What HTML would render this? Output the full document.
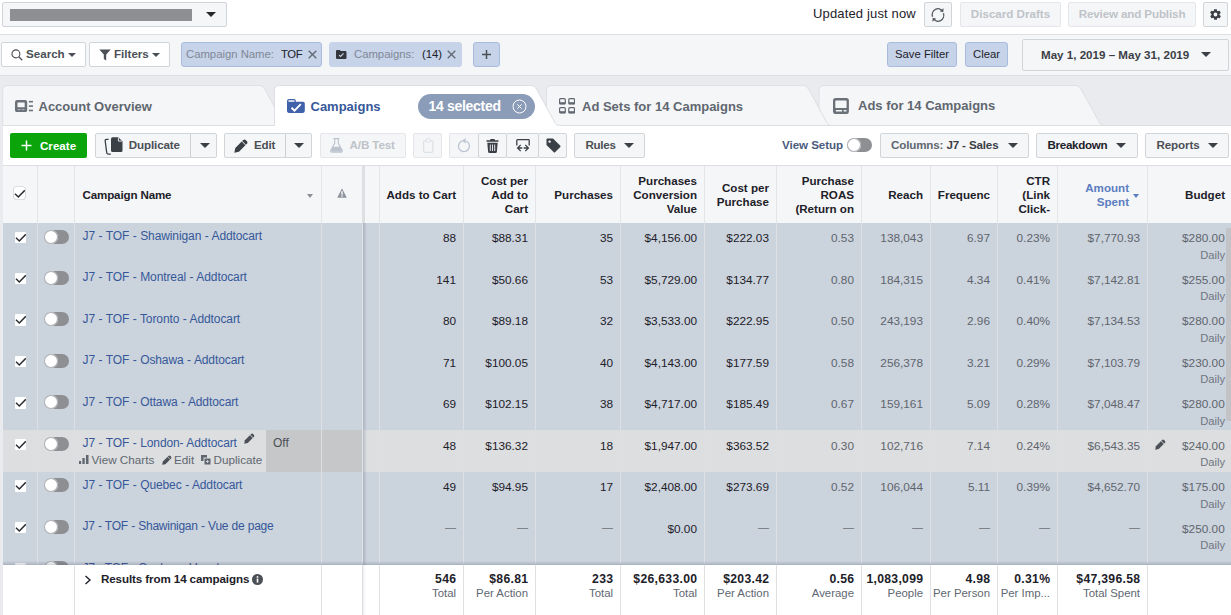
<!DOCTYPE html>
<html lang="en">
<head>
<meta charset="utf-8">
<title>Ads Manager</title>
<style>
*{box-sizing:border-box;margin:0;padding:0}
html,body{width:1231px;height:615px;overflow:hidden;background:#e9ebee;font-family:"Liberation Sans",Arial,sans-serif;font-size:12px;color:#1d2129}
.abs{position:absolute}
.r{text-align:right}
#topbar{left:0;top:0;width:1231px;height:35px;background:#fff;border-bottom:1px solid #dddfe2}
#filterbar{left:0;top:35px;width:1231px;height:41px;background:#f5f6f7;border-bottom:1px solid #dddfe2}
.btn{position:absolute;border:1px solid #d1d4d9;border-radius:2px;background:#f5f6f7;color:#4b4f56;font-weight:bold;font-size:11.6px;line-height:22px;height:24px;white-space:nowrap}
.btn.white{background:#fff}
.btn.dis{color:#bec3c9;border-color:#e4e6ea}
.btn.tb{top:133px;height:25px;line-height:22px}
.chip{position:absolute;top:42px;height:25px;border:1px solid #a9bce0;border-radius:3px;background:#c6d3e8;font-size:11.3px;line-height:22px;color:#7f8897;white-space:nowrap}
.chip b{font-weight:normal;color:#1d2129}
.caret{position:absolute;width:0;height:0;border-left:5px solid transparent;border-right:5px solid transparent;border-top:5px solid #3b3f46}
.scaret{position:absolute;width:0;height:0;border-left:4px solid transparent;border-right:4px solid transparent;border-top:4px solid #4b4f56}
.tablabel{position:absolute;top:98.5px;font-size:13px;line-height:16px;font-weight:bold;color:#606770;white-space:nowrap}
#white{left:3px;top:125px;width:1228px;height:490px;background:#fff}
#table{left:0;top:0;width:1231px;height:615px;overflow:hidden}
#thead{left:3px;top:165px;width:1228px;height:58px;background:#f5f6f7;border-top:1px solid #dddfe2}
.th{font-weight:bold;font-size:11.6px;line-height:14px;color:#1d2129;white-space:nowrap}
.th.blue{color:#5b7dc1}
.row{left:3px;width:1228px;background:#cbd3dd;margin-left:0}
.row>*{margin-left:-3px}
.row.hover{background:#dcdee0}
.nm{font-size:12px;line-height:14px;color:#365899;white-space:nowrap;letter-spacing:-.1px;word-spacing:.3px}
.v{top:7.3px;font-size:11.8px;line-height:16px;color:#1d2129;padding-right:7px;white-space:nowrap}
.v.g{color:#5f656d}
.dash{position:absolute;top:14.6px;width:11px;height:1px;background:#70757d;margin-left:-3px}
.act{font-size:11.7px;line-height:14px;color:#606770;white-space:nowrap}
.cb{position:absolute;width:11px;height:12px;background:#fff;border-radius:2px;box-shadow:0 0 0 .6px #c4c8ce}
.cb.nb{box-shadow:none;height:11.500px;border-radius:1px}
.cb svg{display:block}
.tg{position:absolute;width:25px;height:14px;border-radius:7px;background:#8d8f92}
.tg i{position:absolute;left:0;top:0;width:14px;height:14px;border-radius:7px;background:#fff;box-shadow:0 0 0 1px #aaadb2 inset}
.vl{position:absolute;top:165px;width:1px;height:400px;background:#dfe1e4}
.vl.h{top:166px;height:57px;background:#e3e5e8}
.vl.b{top:223px;height:342px;background:#dcdfe3}
.vl.f{background:#dfe0e3}
#tfoot{left:3px;width:1228px;height:50px;background:#fff}
.fb{font-weight:bold;font-size:11.6px;line-height:16px;color:#1d2129;white-space:nowrap}
.fs{font-size:11.400px;line-height:16px;color:#606770;white-space:nowrap}

.v.d{font-size:11px;color:#6b7078;top:5.300px}
.fb.n{font-size:12.200px;letter-spacing:.3px}

</style>
</head>
<body>
<!-- TOP BAR -->
<div id="topbar" class="abs">
  <div class="btn" style="left:2px;top:2px;width:225px;height:25px"></div>
  <div class="abs" style="left:10px;top:9px;width:182px;height:12px;background:#8e8f93"></div>
  <div class="caret" style="left:206px;top:12px;border-top-color:#26282c"></div>
  <div class="abs" style="left:813px;top:5px;font-size:13px;line-height:18px;color:#1d2129;letter-spacing:.15px">Updated just now</div>
  <div class="btn" style="left:924px;top:2px;width:28px;height:25px"></div>
  <svg class="abs" style="left:931px;top:6.5px" width="14" height="16" viewBox="0 0 14 15" preserveAspectRatio="none"><path d="M11.6 4.3 A5.6 5.6 0 0 0 1.6 9.2" fill="none" stroke="#5a5f66" stroke-width="1.4"/><path d="M2.4 10.7 A5.6 5.6 0 0 0 12.4 5.8" fill="none" stroke="#5a5f66" stroke-width="1.4"/><path d="M12.6 1.2 L12.3 5 L8.7 3.9 Z" fill="#5a5f66"/><path d="M1.4 13.8 L1.7 10 L5.3 11.1 Z" fill="#5a5f66"/></svg>
  <div class="btn dis" style="left:960px;top:2px;width:101px;height:25px;text-align:center">Discard Drafts</div>
  <div class="btn dis" style="left:1068px;top:2px;width:128px;height:25px;text-align:center;letter-spacing:-.12px">Review and Publish</div>
  <div class="btn" style="left:1203px;top:2px;width:25px;height:25px"></div>
  <svg class="abs" style="left:1209px;top:8px" width="13" height="13" viewBox="0 0 24 24"><path fill="#3b3f46" d="M19.4 13a7.5 7.5 0 0 0 0-2l2.1-1.6a.5.5 0 0 0 .1-.6l-2-3.5a.5.5 0 0 0-.6-.2l-2.5 1a7.3 7.3 0 0 0-1.7-1l-.4-2.600a.5.5 0 0 0-.5-.4h-4a.5.5 0 0 0-.5.4l-.4 2.600a7.700 7.700 0 0 0-1.700 1l-2.500-1a.5.5 0 0 0-.6.200l-2 3.500a.5.5 0 0 0 .1.600L4.600 11a7.500 7.500 0 0 0 0 2l-2.100 1.600a.5.500 0 0 0-.1.600l2 3.500c.1.200.400.300.600.200l2.500-1c.5.400 1.100.700 1.700 1l.4 2.600c0 .200.200.400.500.400h4c.2 0 .5-.2.500-.4l.4-2.600a7.300 7.300 0 0 0 1.700-1l2.500 1c.2.100.5 0 .6-.2l2-3.500a.5.500 0 0 0-.1-.6L19.400 13zM12 15.500a3.500 3.500 0 1 1 0-7 3.500 3.500 0 0 1 0 7z"/></svg>
</div>
<!-- FILTER BAR -->
<div id="filterbar" class="abs"></div>
<div class="btn white" style="left:1px;top:42px;width:85px;height:25px;padding-left:24px;line-height:22px">Search</div>
<svg class="abs" style="left:11px;top:48.5px" width="12" height="12" viewBox="0 0 13 13"><circle cx="5.3" cy="5.3" r="4.3" fill="none" stroke="#4b4f56" stroke-width="1.2"/><path d="M8.4 8.4 L12.2 12.2" stroke="#4b4f56" stroke-width="1.4"/></svg>
<div class="scaret" style="left:68px;top:53px"></div>
<div class="btn white" style="left:89px;top:42px;width:81px;height:25px;padding-left:24px;line-height:22px">Filters</div>
<svg class="abs" style="left:99px;top:49px" width="12" height="12" viewBox="0 0 12 12"><path d="M0.3 0.5 H11.7 L7.2 5.6 V11.5 L4.8 10 V5.6 Z" fill="#4b4f56"/></svg>
<div class="scaret" style="left:152px;top:53px"></div>
<div class="chip" style="left:181px;width:141px;padding-left:4px">Campaign Name:<b style="position:absolute;left:99px;letter-spacing:-.4px">TOF</b></div>
<svg class="abs" style="left:307.5px;top:50px" width="9" height="9" viewBox="0 0 9 9"><path d="M0.7 0.7 L8.3 8.3 M8.3 0.7 L0.7 8.3" stroke="#606770" stroke-width="1.3"/></svg>
<div class="chip" style="left:329px;width:133px;padding-left:24px;border-color:#c6d3e8">Campaigns:<b style="position:absolute;left:92px">(14)</b></div>
<svg class="abs" style="left:336px;top:49.5px" width="10.5" height="9" viewBox="0 0 11 10" preserveAspectRatio="none"><path d="M0 1.2 Q0 0 1.2 0 H4 L5 1.2 H9.800 Q11 1.200 11 2.400 V8.800 Q11 10 9.800 10 H1.2 Q0 10 0 8.800 Z" fill="#33373d"/><path d="M3.2 5.600 L4.800 7.200 L7.900 3.800" fill="none" stroke="#c6d3e8" stroke-width="1.2"/></svg>
<svg class="abs" style="left:447px;top:50px" width="9" height="9" viewBox="0 0 9 9"><path d="M0.7 0.7 L8.3 8.3 M8.3 0.7 L0.7 8.3" stroke="#606770" stroke-width="1.3"/></svg>
<div class="chip" style="left:473px;width:27px"></div>
<svg class="abs" style="left:482px;top:50px" width="9" height="9" viewBox="0 0 9 9"><path d="M4.5 0 V9 M0 4.5 H9" stroke="#4b4f56" stroke-width="1.5"/></svg>
<div class="chip" style="left:887px;width:70px;color:#1d2129;text-align:center">Save Filter</div>
<div class="chip" style="left:965px;width:43px;color:#1d2129;text-align:center">Clear</div>
<div class="btn" style="left:1022px;top:39px;width:207px;height:32px;line-height:29px;padding-left:18px;color:#3b3f46">May 1, 2019 – May 31, 2019</div>
<div class="caret" style="left:1200.600px;top:52px"></div>

<!-- TABS -->
<svg class="abs" style="left:0;top:76px" width="1231" height="52" viewBox="0 76 1231 52">
  <path d="M819 125.5 V90.5 Q819 85.5 824 85.5 H1075.0 Q1079.3 85.5 1081.3 89.6 L1099.8 123.3 Q1101 125.5 1104 125.5 Z" fill="#f5f6f7" stroke="#dddfe2"/>
  <path d="M546.5 125.5 V90.5 Q546.5 85.5 551.5 85.5 H802.5 Q806.8 85.5 808.8 89.6 L827.3 123.3 Q828.5 125.5 831.5 125.5 Z" fill="#f5f6f7" stroke="#dddfe2"/>
  <path d="M2.7 125.5 V90.5 Q2.7 85.5 7.7 85.5 H258.7 Q263.0 85.5 265.0 89.6 L283.5 123.3 Q284.7 125.5 287.7 125.5 Z" fill="#f5f6f7" stroke="#dddfe2"/>
  <path d="M0 125.5 H1231" stroke="#dddfe2"/>
  <path d="M274.5 125.5 V90.5 Q274.5 85.5 279.5 85.5 H530.5 Q534.8 85.5 536.8 89.6 L555.3 123.3 Q556.5 125.5 559.5 125.5 V127 H274.5 Z" fill="#fff"/>
  <path d="M274.5 125.5 V90.5 Q274.5 85.5 279.5 85.5 H530.5 Q534.8 85.5 536.8 89.6 L555.3 123.3 Q556.5 125.5 559.5 125.5" fill="none" stroke="#dddfe2"/>
</svg>
<div id="white" class="abs" style="top:126px;height:489px"></div>
<!-- tab: account overview -->
<svg class="abs" style="left:15px;top:99.800px" width="18.200" height="12.400" viewBox="0 0 18.200 12.400"><rect x="0" y="0" width="12.200" height="12.200" rx="2.200" fill="#6b7179"/><rect x="2.500" y="2.500" width="7.200" height="4.700" rx="0.400" fill="#f5f6f7"/><rect x="2.700" y="9.200" width="2.800" height="0.900" fill="#b9bdc3"/><rect x="6.700" y="9.200" width="2.800" height="0.900" fill="#b9bdc3"/><rect x="13.900" y="0.900" width="4.100" height="1.600" fill="#6b7179"/><rect x="13.900" y="5.300" width="4.100" height="1.600" fill="#6b7179"/><rect x="13.900" y="9.700" width="4.100" height="1.600" fill="#6b7179"/></svg>
<div class="tablabel" style="left:38.500px">Account Overview</div>
<!-- tab: campaigns -->
<svg class="abs" style="left:287px;top:99px" width="18" height="14" viewBox="0 0 18 14"><path d="M0 2 Q0 0 2 0 H7 Q8.800 0 8.800 1.800 V2.700 H16 Q17.800 2.700 17.800 4.500 V12.100 Q17.800 13.900 16 13.900 H1.800 Q0 13.900 0 12.100 Z" fill="#3f62ab"/><rect x="1.400" y="1.200" width="6.100" height="1.500" rx="0.500" fill="#fff"/><path d="M4.500 8.800 L7.500 11.700 L13.800 5.200" fill="none" stroke="#fff" stroke-width="1.900"/></svg>
<div class="tablabel" style="left:310.500px;color:#365899">Campaigns</div>
<div class="abs" style="left:418px;top:94px;width:117px;height:25px;border-radius:12.500px;background:#8b9cb8"></div>
<div class="tablabel" style="left:428.500px;top:97.500px;color:#fff;font-size:14px;letter-spacing:-.3px">14 selected</div>
<svg class="abs" style="left:511.500px;top:98.500px" width="15" height="15" viewBox="-0.500 -0.500 15 15"><circle cx="7" cy="7" r="6.500" fill="none" stroke="#fff" stroke-width="1"/><path d="M4.900 4.900 L9.100 9.100 M9.100 4.900 L4.900 9.100" stroke="#fff" stroke-width="1"/></svg>
<!-- tab: ad sets -->
<svg class="abs" style="left:559px;top:98px" width="16.2" height="15.8" viewBox="0 0 16.2 15.8"><g fill="#f5f6f7" stroke="#606770" stroke-width="1.2"><rect x="0.6" y="0.6" width="5.7" height="5.4" rx="1"/><rect x="9.8" y="0.6" width="5.7" height="5.4" rx="1"/><rect x="0.6" y="9.6" width="5.7" height="5.4" rx="1"/><rect x="9.8" y="9.6" width="5.7" height="5.4" rx="1"/></g><g fill="#606770"><rect x="0.6" y="4.2" width="5.7" height="2"/><rect x="9.8" y="4.2" width="5.7" height="2"/><rect x="0.6" y="13.2" width="5.7" height="2"/><rect x="9.8" y="13.2" width="5.7" height="2"/></g></svg>
<div class="tablabel" style="left:582px">Ad Sets for 14 Campaigns</div>
<!-- tab: ads -->
<svg class="abs" style="left:833px;top:97.800px" width="16" height="16.200" viewBox="0 0 16 16.200"><rect x="0" y="0" width="15.900" height="16.100" rx="2.600" fill="#6b7179"/><rect x="2.300" y="2.600" width="11.300" height="7.400" rx="0.400" fill="#f5f6f7"/><rect x="2.900" y="12" width="6.100" height="1.500" fill="#f5f6f7"/><rect x="10.700" y="12" width="2.700" height="1.500" fill="#f5f6f7"/></svg>
<div class="tablabel" style="left:858px;top:97.500px">Ads for 14 Campaigns</div>

<!-- TOOLBAR -->
<div class="abs" style="left:10px;top:133px;width:77px;height:25px;border-radius:2px;background:#0ca40b;color:#fff;font-weight:bold;font-size:11.600px;line-height:25px;padding-left:30px">Create</div>
<svg class="abs" style="left:21px;top:140px" width="11" height="11" viewBox="0 0 11 11"><path d="M5.500 0.500 V10.500 M0.500 5.500 H10.500" stroke="#fff" stroke-width="1.500"/></svg>
<div class="btn tb" style="left:95px;width:122px;padding-left:32.700px;letter-spacing:-.1px">Duplicate</div>
<div class="abs" style="left:190px;top:134px;width:1px;height:23px;background:#ccd0d5"></div>
<svg class="abs" style="left:103.5px;top:137px" width="19" height="18" viewBox="0 0 19 18"><path d="M4.600 2.400 H2.600 Q1 2.400 1.200 4 L2.700 15.600 Q2.900 17.100 4.500 17.100 H6.800" fill="none" stroke="#3b3f46" stroke-width="1.300"/><path d="M7 1.800 Q7 0.300 8.500 0.300 H14.200 L18.500 4.300 V13.600 Q18.500 15.100 17 15.100 H8.500 Q7 15.100 7 13.600 Z" fill="#3b3f46"/><path d="M14.400 0.700 V4.100 H18" fill="none" stroke="#f5f6f7" stroke-width="0.900"/></svg>
<div class="caret" style="left:199.700px;top:143px"></div>
<div class="btn tb" style="left:224px;width:88px;padding-left:29px;letter-spacing:-.2px">Edit</div>
<div class="abs" style="left:285px;top:134px;width:1px;height:23px;background:#ccd0d5"></div>
<svg class="abs" style="left:233.500px;top:138.500px" width="14" height="14" viewBox="0 0 14 14"><g transform="translate(0.300,13.700) rotate(-45)"><path d="M0 0 L4 -2.600 H15.200 Q17 -2.600 17 -0.800 V0.800 Q17 2.600 15.200 2.600 H4 Z" fill="#3b3f46"/><rect x="13.100" y="-2.600" width="0.700" height="5.200" fill="#f5f6f7"/></g></svg>
<div class="caret" style="left:294px;top:143px"></div>
<div class="btn tb dis" style="left:320px;width:86px;padding-left:28.500px;letter-spacing:-.1px">A/B Test</div>
<svg class="abs" style="left:329.500px;top:138px" width="13" height="15" viewBox="0 0 13 15"><path d="M3.600 0.600 H9.400" stroke="#bcc2ce" stroke-width="1.200" fill="none"/><path d="M4.700 0.600 V5.300 L0.900 12.300 Q0.200 14.200 2 14.200 H11 Q12.800 14.200 12.100 12.300 L8.300 5.300 V0.600" fill="none" stroke="#bcc2ce" stroke-width="1.100"/><path d="M3 8.800 H10 L11.800 12.400 Q12.200 13.800 11 13.800 H2 Q0.800 13.800 1.200 12.400 Z" fill="#bcc2ce"/></svg>
<div class="btn tb dis" style="left:413px;width:29px"></div>
<svg class="abs" style="left:423px;top:138px" width="10.500" height="15" viewBox="0 0 10.500 15"><rect x="0.600" y="2.600" width="9.300" height="11.800" rx="1.500" fill="none" stroke="#dde0e5" stroke-width="1.200"/><rect x="3.100" y="0.600" width="4.300" height="3.500" rx="1" fill="#f5f6f7" stroke="#dde0e5" stroke-width="1"/></svg>
<div class="btn tb dis" style="left:449px;width:30px;border-right-color:#ccd0d5"></div>
<svg class="abs" style="left:457px;top:138px" width="14" height="15" viewBox="0 0 14 15"><path d="M5.200 2.900 A5.500 5.500 0 1 0 9 3" fill="none" stroke="#bcc5d2" stroke-width="1.300"/><path d="M8.600 0 L8.600 5.500 L4.900 2.700 Z" fill="#bcc5d2"/></svg>
<div class="btn tb" style="left:478px;width:29px"></div>
<svg class="abs" style="left:486px;top:139px" width="13" height="14" viewBox="0 0 13 14"><path d="M4.500 0 H8.500 L9 1.300 H12.500 V2.800 H0.500 V1.300 H4 Z" fill="#3b3f46"/><path d="M1.300 3.700 H11.700 L10.900 12.800 Q10.800 14 9.600 14 H3.400 Q2.200 14 2.100 12.800 Z" fill="#3b3f46"/><path d="M4.300 5.500 V12 M6.500 5.500 V12 M8.700 5.500 V12" stroke="#f5f6f7" stroke-width="0.900"/></svg>
<div class="btn tb" style="left:506px;width:33px"></div>
<svg class="abs" style="left:515px;top:138px" width="16" height="15" viewBox="0 0 16 15"><path d="M1.800 7.600 V2.500 Q1.800 1.700 2.600 1.700 H13.400 Q14.200 1.700 14.200 2.500 V7.600" fill="none" stroke="#3b3f46" stroke-width="1.300"/><path d="M2.800 10 H7.300 M8.700 10 H13.200 M5.700 6.900 L2.600 10 L5.700 13.100 M10.300 6.900 L13.400 10 L10.300 13.100" fill="none" stroke="#3b3f46" stroke-width="1.300"/></svg>
<div class="btn tb" style="left:538px;width:29px"></div>
<svg class="abs" style="left:545.700px;top:138.200px" width="15" height="15" viewBox="0 0 15 15"><path d="M0.500 1.500 Q0.500 0.500 1.500 0.500 H7 L14.300 7.800 Q14.800 8.400 14.300 9 L9 14.300 Q8.400 14.800 7.800 14.300 L0.500 7 Z" fill="#3b3f46"/><circle cx="3.600" cy="3.600" r="1.200" fill="#f5f6f7"/></svg>
<div class="btn tb" style="left:574px;width:71px;padding-left:10.500px;letter-spacing:-.3px">Rules</div>
<div class="caret" style="left:624px;top:143px"></div>
<div class="abs" style="left:782px;top:138px;font-size:11.600px;font-weight:bold;color:#4a5b7d;line-height:14px;letter-spacing:-.05px">View Setup</div>
<div class="tg" style="left:847px;top:138px;background:#8d8f92"><i></i></div>
<div class="btn tb" style="left:880px;width:149px;padding-left:10px;font-weight:normal;color:#606770;font-size:12px;letter-spacing:-.15px"><span style="font-weight:bold;color:#606770;font-size:11.600px">Columns:</span> <b style="color:#3b3f46;font-size:11.600px">J7 - Sales</b></div>
<div class="caret" style="left:1008px;top:143px"></div>
<div class="btn tb" style="left:1036px;width:102px;padding-left:10.5px;color:#1d2129;letter-spacing:-.3px">Breakdown</div>
<div class="caret" style="left:1116px;top:143px"></div>
<div class="btn tb" style="left:1145px;width:84px;padding-left:10.5px;letter-spacing:-.1px">Reports</div>
<div class="caret" style="left:1208px;top:143px"></div>
<!-- TABLE -->
<div id="table" class="abs">
<div class="abs" id="thead"></div>
<div class="cb" style="left:14.3px;top:187.300px"><svg viewBox="0 0 11 12" width="11" height="12"><path d="M1 6.800 L4.300 10 L10.800 3.300" fill="none" stroke="#2b2e33" stroke-width="1.500"/></svg></div>
<div class="th abs" style="left:82.500px;top:187px;line-height:16px;letter-spacing:-.15px">Campaign Name</div>
<div class="scaret" style="left:307.400px;top:194px;border-top-color:#8a8f96;border-left-width:3.100px;border-right-width:3.100px"></div>
<svg class="abs" style="left:337px;top:188px" width="10" height="10" viewBox="0 0 10 10"><path d="M5 0.3 L9.8 9.7 L0.2 9.7 Z" fill="#8d949e"/><rect x="4.3" y="3.2" width="1.4" height="3.6" fill="#f5f6f7"/><rect x="4.3" y="7.4" width="1.4" height="1.3" fill="#f5f6f7"/></svg>
<div class="th abs r" style="left:380px;width:83px;top:188.0px;padding-right:7px">Adds to Cart</div>
<div class="th abs r" style="left:463px;width:72px;top:174.0px;padding-right:7px">Cost per<br>Add to<br>Cart</div>
<div class="th abs r" style="left:535px;width:85px;top:188.0px;padding-right:7px">Purchases</div>
<div class="th abs r" style="left:620px;width:84px;top:174.0px;padding-right:7px">Purchases<br>Conversion<br>Value</div>
<div class="th abs r" style="left:704px;width:72px;top:181.0px;padding-right:7px">Cost per<br>Purchase</div>
<div class="th abs r" style="left:776px;width:85px;top:174.0px;padding-right:7px">Purchase<br>ROAS<br>(Return on</div>
<div class="th abs r" style="left:861px;width:69px;top:188.0px;padding-right:7px">Reach</div>
<div class="th abs r" style="left:930px;width:67px;top:188.0px;padding-right:7px">Frequenc</div>
<div class="th abs r" style="left:997px;width:60px;top:174.0px;padding-right:7px">CTR<br>(Link<br>Click-</div>
<div class="th abs r blue" style="left:1057px;width:90px;top:181.0px;padding-right:18px">Amount<br>Spent</div>
<div class="th abs r" style="left:1147px;width:84px;top:188.0px;padding-right:6px">Budget</div>
<div class="scaret" style="left:1133px;top:194px;border-top-color:#5b7dc1;border-left-width:3.5px;border-right-width:3.5px"></div>
<div class="row abs" style="top:223.0px;height:41.47px">
<div class="cb nb" style="left:14.500px;top:8.500px"><svg viewBox="0 0 11 12" width="11" height="12"><path d="M1 5.800 L4.300 9 L10.800 2.300" fill="none" stroke="#2b2e33" stroke-width="1.500"/></svg></div>
<div class="tg" style="left:44px;top:6.500px"><i></i></div>
<div class="nm abs" style="left:82.5px;top:5.8px">J7 - TOF - Shawinigan - Addtocart</div>
<div class="v abs r" style="left:380px;width:83px">88</div>
<div class="v abs r" style="left:463px;width:72px">$88.31</div>
<div class="v abs r" style="left:535px;width:85px">35</div>
<div class="v abs r" style="left:620px;width:84px">$4,156.00</div>
<div class="v abs r" style="left:704px;width:72px">$222.03</div>
<div class="v abs r g" style="left:776px;width:85px">0.53</div>
<div class="v abs r g" style="left:861px;width:69px">138,043</div>
<div class="v abs r g" style="left:930px;width:67px">6.97</div>
<div class="v abs r g" style="left:997px;width:60px">0.23%</div>
<div class="v abs r g" style="left:1057px;width:90px">$7,770.93</div>
<div class="v abs r g" style="left:1147px;width:84px;padding-right:6.3px">$280.00</div>
<div class="v abs r g" style="left:1147px;width:84px;top:23.8px;color:#70767f;padding-right:6px;font-size:11.2px">Daily</div>
</div>
<div class="row abs" style="top:264.47px;height:41.47px">
<div class="cb nb" style="left:14.500px;top:8.500px"><svg viewBox="0 0 11 12" width="11" height="12"><path d="M1 5.800 L4.300 9 L10.800 2.300" fill="none" stroke="#2b2e33" stroke-width="1.500"/></svg></div>
<div class="tg" style="left:44px;top:6.500px"><i></i></div>
<div class="nm abs" style="left:82.5px;top:5.8px">J7 - TOF - Montreal - Addtocart</div>
<div class="v abs r" style="left:380px;width:83px">141</div>
<div class="v abs r" style="left:463px;width:72px">$50.66</div>
<div class="v abs r" style="left:535px;width:85px">53</div>
<div class="v abs r" style="left:620px;width:84px">$5,729.00</div>
<div class="v abs r" style="left:704px;width:72px">$134.77</div>
<div class="v abs r g" style="left:776px;width:85px">0.80</div>
<div class="v abs r g" style="left:861px;width:69px">184,315</div>
<div class="v abs r g" style="left:930px;width:67px">4.34</div>
<div class="v abs r g" style="left:997px;width:60px">0.41%</div>
<div class="v abs r g" style="left:1057px;width:90px">$7,142.81</div>
<div class="v abs r g" style="left:1147px;width:84px;padding-right:6.3px">$255.00</div>
<div class="v abs r g" style="left:1147px;width:84px;top:23.8px;color:#70767f;padding-right:6px;font-size:11.2px">Daily</div>
</div>
<div class="row abs" style="top:305.94px;height:41.47px">
<div class="cb nb" style="left:14.500px;top:8.500px"><svg viewBox="0 0 11 12" width="11" height="12"><path d="M1 5.800 L4.300 9 L10.800 2.300" fill="none" stroke="#2b2e33" stroke-width="1.500"/></svg></div>
<div class="tg" style="left:44px;top:6.500px"><i></i></div>
<div class="nm abs" style="left:82.5px;top:5.8px">J7 - TOF - Toronto - Addtocart</div>
<div class="v abs r" style="left:380px;width:83px">80</div>
<div class="v abs r" style="left:463px;width:72px">$89.18</div>
<div class="v abs r" style="left:535px;width:85px">32</div>
<div class="v abs r" style="left:620px;width:84px">$3,533.00</div>
<div class="v abs r" style="left:704px;width:72px">$222.95</div>
<div class="v abs r g" style="left:776px;width:85px">0.50</div>
<div class="v abs r g" style="left:861px;width:69px">243,193</div>
<div class="v abs r g" style="left:930px;width:67px">2.96</div>
<div class="v abs r g" style="left:997px;width:60px">0.40%</div>
<div class="v abs r g" style="left:1057px;width:90px">$7,134.53</div>
<div class="v abs r g" style="left:1147px;width:84px;padding-right:6.3px">$280.00</div>
<div class="v abs r g" style="left:1147px;width:84px;top:23.8px;color:#70767f;padding-right:6px;font-size:11.2px">Daily</div>
</div>
<div class="row abs" style="top:347.40999999999997px;height:41.47px">
<div class="cb nb" style="left:14.500px;top:8.500px"><svg viewBox="0 0 11 12" width="11" height="12"><path d="M1 5.800 L4.300 9 L10.800 2.300" fill="none" stroke="#2b2e33" stroke-width="1.500"/></svg></div>
<div class="tg" style="left:44px;top:6.500px"><i></i></div>
<div class="nm abs" style="left:82.5px;top:5.8px">J7 - TOF - Oshawa - Addtocart</div>
<div class="v abs r" style="left:380px;width:83px">71</div>
<div class="v abs r" style="left:463px;width:72px">$100.05</div>
<div class="v abs r" style="left:535px;width:85px">40</div>
<div class="v abs r" style="left:620px;width:84px">$4,143.00</div>
<div class="v abs r" style="left:704px;width:72px">$177.59</div>
<div class="v abs r g" style="left:776px;width:85px">0.58</div>
<div class="v abs r g" style="left:861px;width:69px">256,378</div>
<div class="v abs r g" style="left:930px;width:67px">3.21</div>
<div class="v abs r g" style="left:997px;width:60px">0.29%</div>
<div class="v abs r g" style="left:1057px;width:90px">$7,103.79</div>
<div class="v abs r g" style="left:1147px;width:84px;padding-right:6.3px">$230.00</div>
<div class="v abs r g" style="left:1147px;width:84px;top:23.8px;color:#70767f;padding-right:6px;font-size:11.2px">Daily</div>
</div>
<div class="row abs" style="top:388.88px;height:41.47px">
<div class="cb nb" style="left:14.500px;top:8.500px"><svg viewBox="0 0 11 12" width="11" height="12"><path d="M1 5.800 L4.300 9 L10.800 2.300" fill="none" stroke="#2b2e33" stroke-width="1.500"/></svg></div>
<div class="tg" style="left:44px;top:6.500px"><i></i></div>
<div class="nm abs" style="left:82.5px;top:5.8px">J7 - TOF - Ottawa - Addtocart</div>
<div class="v abs r" style="left:380px;width:83px">69</div>
<div class="v abs r" style="left:463px;width:72px">$102.15</div>
<div class="v abs r" style="left:535px;width:85px">38</div>
<div class="v abs r" style="left:620px;width:84px">$4,717.00</div>
<div class="v abs r" style="left:704px;width:72px">$185.49</div>
<div class="v abs r g" style="left:776px;width:85px">0.67</div>
<div class="v abs r g" style="left:861px;width:69px">159,161</div>
<div class="v abs r g" style="left:930px;width:67px">5.09</div>
<div class="v abs r g" style="left:997px;width:60px">0.28%</div>
<div class="v abs r g" style="left:1057px;width:90px">$7,048.47</div>
<div class="v abs r g" style="left:1147px;width:84px;padding-right:6.3px">$280.00</div>
<div class="v abs r g" style="left:1147px;width:84px;top:23.8px;color:#70767f;padding-right:6px;font-size:11.2px">Daily</div>
</div>
<div class="row abs hover" style="top:430.35px;height:41.47px">
<div class="abs" style="left:266px;top:0;width:96px;height:41.5px;background:#c5c7c8"></div><div class="abs" style="left:273px;top:6px;font-size:12px;line-height:14px;color:#4b4f56">Off</div>
<div class="cb nb" style="left:14.500px;top:8.500px"><svg viewBox="0 0 11 12" width="11" height="12"><path d="M1 5.800 L4.300 9 L10.800 2.300" fill="none" stroke="#2b2e33" stroke-width="1.500"/></svg></div>
<div class="tg" style="left:44px;top:6.500px"><i></i></div>
<div class="nm abs" style="left:82.5px;top:5.8px">J7 - TOF - London- Addtocart</div>
<svg class="abs" style="left:243.5px;top:2.5px" width="11" height="11" viewBox="0 0 11 11"><g transform="translate(0.2,10.8) rotate(-45)"><path d="M0 0 L3 -2 H11.800 Q13.200 -2 13.200 -0.600 V0.600 Q13.200 2 11.800 2 H3 Z" fill="#4b4f56"/><rect x="10.200" y="-2" width="0.600" height="4" fill="#dcdee0"/></g></svg>
<svg class="abs" style="left:79px;top:25px" width="9.5" height="9" viewBox="0 0 9 9" preserveAspectRatio="none"><rect x="0" y="6" width="2" height="3" fill="#606770"/><rect x="3.2" y="3" width="2.2" height="6" fill="#606770"/><rect x="6.6" y="0" width="2.4" height="9" fill="#606770"/></svg><div class="abs act" style="left:91.5px;top:22.5px">View Charts</div><svg class="abs" style="left:161.5px;top:24.5px" width="10" height="10" viewBox="0 0 11 11"><g transform="translate(0.2,10.8) rotate(-45)"><path d="M0 0 L3 -2 H11.800 Q13.200 -2 13.200 -0.600 V0.600 Q13.200 2 11.800 2 H3 Z" fill="#4b4f56"/><rect x="10.200" y="-2" width="0.600" height="4" fill="#dcdee0"/></g></svg><div class="abs act" style="left:174px;top:22.5px">Edit</div><svg class="abs" style="left:200.5px;top:24.5px" width="10" height="10" viewBox="0 0 10 10"><rect x="0" y="0" width="6" height="6" fill="#606770"/><rect x="3" y="3" width="7" height="7" fill="#606770" stroke="#dcdee0" stroke-width="1"/><rect x="5.2" y="6" width="2.6" height="1" fill="#dcdee0"/><rect x="6" y="5.2" width="1" height="2.600" fill="#dcdee0"/></svg><div class="abs act" style="left:213.5px;top:22.5px">Duplicate</div>
<div class="v abs r" style="left:380px;width:83px">48</div>
<div class="v abs r" style="left:463px;width:72px">$136.32</div>
<div class="v abs r" style="left:535px;width:85px">18</div>
<div class="v abs r" style="left:620px;width:84px">$1,947.00</div>
<div class="v abs r" style="left:704px;width:72px">$363.52</div>
<div class="v abs r g" style="left:776px;width:85px">0.30</div>
<div class="v abs r g" style="left:861px;width:69px">102,716</div>
<div class="v abs r g" style="left:930px;width:67px">7.14</div>
<div class="v abs r g" style="left:997px;width:60px">0.24%</div>
<div class="v abs r g" style="left:1057px;width:90px">$6,543.35</div>
<div class="v abs r g" style="left:1147px;width:84px;padding-right:6.3px">$240.00</div>
<div class="v abs r g" style="left:1147px;width:84px;top:23.8px;color:#70767f;padding-right:6px;font-size:11.2px">Daily</div>
<svg class="abs" style="left:1155px;top:9px" width="11" height="11" viewBox="0 0 11 11"><g transform="translate(0.2,10.8) rotate(-45)"><path d="M0 0 L3 -2 H11.800 Q13.200 -2 13.200 -0.600 V0.600 Q13.200 2 11.800 2 H3 Z" fill="#4b4f56"/><rect x="10.200" y="-2" width="0.600" height="4" fill="#dcdee0"/></g></svg>
</div>
<div class="row abs" style="top:471.82px;height:41.47px">
<div class="cb nb" style="left:14.500px;top:8.500px"><svg viewBox="0 0 11 12" width="11" height="12"><path d="M1 5.800 L4.300 9 L10.800 2.300" fill="none" stroke="#2b2e33" stroke-width="1.500"/></svg></div>
<div class="tg" style="left:44px;top:6.500px"><i></i></div>
<div class="nm abs" style="left:82.5px;top:5.8px">J7 - TOF - Quebec - Addtocart</div>
<div class="v abs r" style="left:380px;width:83px">49</div>
<div class="v abs r" style="left:463px;width:72px">$94.95</div>
<div class="v abs r" style="left:535px;width:85px">17</div>
<div class="v abs r" style="left:620px;width:84px">$2,408.00</div>
<div class="v abs r" style="left:704px;width:72px">$273.69</div>
<div class="v abs r g" style="left:776px;width:85px">0.52</div>
<div class="v abs r g" style="left:861px;width:69px">106,044</div>
<div class="v abs r g" style="left:930px;width:67px">5.11</div>
<div class="v abs r g" style="left:997px;width:60px">0.39%</div>
<div class="v abs r g" style="left:1057px;width:90px">$4,652.70</div>
<div class="v abs r g" style="left:1147px;width:84px;padding-right:6.3px">$175.00</div>
<div class="v abs r g" style="left:1147px;width:84px;top:23.8px;color:#70767f;padding-right:6px;font-size:11.2px">Daily</div>
</div>
<div class="row abs" style="top:513.29px;height:41.47px">
<div class="cb nb" style="left:14.500px;top:8.500px"><svg viewBox="0 0 11 12" width="11" height="12"><path d="M1 5.800 L4.300 9 L10.800 2.300" fill="none" stroke="#2b2e33" stroke-width="1.500"/></svg></div>
<div class="tg" style="left:44px;top:6.500px"><i></i></div>
<div class="nm abs" style="left:82.5px;top:5.8px;letter-spacing:-.27px">J7 - TOF - Shawinigan - Vue de page</div>
<div class="v abs r d" style="left:380px;width:83px">—</div>
<div class="v abs r d" style="left:463px;width:72px">—</div>
<div class="v abs r d" style="left:535px;width:85px">—</div>
<div class="v abs r" style="left:620px;width:84px">$0.00</div>
<div class="v abs r d" style="left:704px;width:72px">—</div>
<div class="v abs r d" style="left:776px;width:85px">—</div>
<div class="v abs r d" style="left:861px;width:69px">—</div>
<div class="v abs r d" style="left:930px;width:67px">—</div>
<div class="v abs r d" style="left:997px;width:60px">—</div>
<div class="v abs r d" style="left:1057px;width:90px">—</div>
<div class="v abs r g" style="left:1147px;width:84px;padding-right:6.3px">$250.00</div>
<div class="v abs r g" style="left:1147px;width:84px;top:23.8px;color:#70767f;padding-right:6px;font-size:11.2px">Daily</div>
</div>
<div class="row abs" style="top:554.76px;height:41.47px">
<div class="cb nb" style="left:14.500px;top:8.500px"><svg viewBox="0 0 11 12" width="11" height="12"><path d="M1 5.800 L4.300 9 L10.800 2.300" fill="none" stroke="#2b2e33" stroke-width="1.500"/></svg></div>
<div class="tg" style="left:44px;top:6.500px"><i></i></div>
<div class="nm abs" style="left:82.5px;top:5.8px;letter-spacing:-.27px">J7 - TOF - Quebec - Vue de page</div>
<div class="v abs r d" style="left:380px;width:83px">—</div>
<div class="v abs r d" style="left:463px;width:72px">—</div>
<div class="v abs r d" style="left:535px;width:85px">—</div>
<div class="v abs r" style="left:620px;width:84px">$0.00</div>
<div class="v abs r d" style="left:704px;width:72px">—</div>
<div class="v abs r d" style="left:776px;width:85px">—</div>
<div class="v abs r d" style="left:861px;width:69px">—</div>
<div class="v abs r d" style="left:930px;width:67px">—</div>
<div class="v abs r d" style="left:997px;width:60px">—</div>
<div class="v abs r d" style="left:1057px;width:90px">—</div>
<div class="v abs r g" style="left:1147px;width:84px;padding-right:6.3px">$250.00</div>
<div class="v abs r g" style="left:1147px;width:84px;top:23.8px;color:#70767f;padding-right:6px;font-size:11.2px">Daily</div>
</div>
<div class="vl h" style="left:37px"></div><div class="vl b" style="left:37px"></div>
<div class="vl h" style="left:74px"></div><div class="vl b" style="left:74px"></div>
<div class="vl h" style="left:321px"></div><div class="vl b" style="left:321px"></div>
<div class="vl h" style="left:379px"></div><div class="vl b" style="left:379px"></div>
<div class="vl h" style="left:463px"></div><div class="vl b" style="left:463px"></div>
<div class="vl h" style="left:535px"></div><div class="vl b" style="left:535px"></div>
<div class="vl h" style="left:620px"></div><div class="vl b" style="left:620px"></div>
<div class="vl h" style="left:704px"></div><div class="vl b" style="left:704px"></div>
<div class="vl h" style="left:776px"></div><div class="vl b" style="left:776px"></div>
<div class="vl h" style="left:861px"></div><div class="vl b" style="left:861px"></div>
<div class="vl h" style="left:930px"></div><div class="vl b" style="left:930px"></div>
<div class="vl h" style="left:997px"></div><div class="vl b" style="left:997px"></div>
<div class="vl h" style="left:1057px"></div><div class="vl b" style="left:1057px"></div>
<div class="vl h" style="left:1147px"></div><div class="vl b" style="left:1147px"></div>
<div class="abs" style="left:362px;top:165px;width:1px;height:450px;background:#e1e2e4"></div>
<div class="abs" style="left:363px;top:223px;width:4px;height:342px;background:linear-gradient(to right,rgba(90,100,125,.28),rgba(90,100,125,0))"></div>
<div class="abs" style="left:362px;top:166px;width:3px;height:57px;background:#dedfe2"></div>
<div class="abs" style="left:1225.5px;top:228px;width:6px;height:193px;background:#c1c3c6;border-radius:2px 0 0 2px"></div>
<div id="tfoot" class="abs" style="top:565px"></div>
<div class="abs" style="left:0;top:561px;width:1231px;height:4px;background:linear-gradient(to bottom,rgba(60,70,90,0),rgba(60,70,90,.24))"></div>
<div class="vl f" style="left:74px;top:565px;height:50px"></div>
<div class="vl f" style="left:321px;top:565px;height:50px"></div>
<div class="vl f" style="left:379px;top:565px;height:50px"></div>
<div class="vl f" style="left:463px;top:565px;height:50px"></div>
<div class="vl f" style="left:535px;top:565px;height:50px"></div>
<div class="vl f" style="left:620px;top:565px;height:50px"></div>
<div class="vl f" style="left:704px;top:565px;height:50px"></div>
<div class="vl f" style="left:776px;top:565px;height:50px"></div>
<div class="vl f" style="left:861px;top:565px;height:50px"></div>
<div class="vl f" style="left:930px;top:565px;height:50px"></div>
<div class="vl f" style="left:997px;top:565px;height:50px"></div>
<div class="vl f" style="left:1057px;top:565px;height:50px"></div>
<div class="vl f" style="left:1147px;top:565px;height:50px"></div>
<div class="vl f" style="left:362px;top:565px;height:50px;background:#dcdde0"></div><div class="abs" style="left:363px;top:565px;width:3px;height:50px;background:linear-gradient(to right,rgba(90,100,125,.1),rgba(90,100,125,0))"></div>
<svg class="abs" style="left:84px;top:575px" width="8" height="10" viewBox="0 0 8 10"><path d="M1.5 1 L6 5 L1.5 9" fill="none" stroke="#1d2129" stroke-width="1.4"/></svg>
<div class="abs fb" style="left:101px;top:571px;letter-spacing:-.1px">Results from 14 campaigns</div>
<svg class="abs" style="left:251.700px;top:574px" width="11" height="11" viewBox="0 0 11 11"><circle cx="5.5" cy="5.5" r="5.5" fill="#4b4f56"/><rect x="4.7" y="4.6" width="1.6" height="4" fill="#fff"/><rect x="4.7" y="2.2" width="1.6" height="1.6" fill="#fff"/></svg>
<div class="abs r fb n" style="left:380px;width:83px;top:571px;padding-right:6.700px">546</div><div class="abs r fs" style="left:380px;width:83px;top:585px;padding-right:7px">Total</div>
<div class="abs r fb n" style="left:463px;width:72px;top:571px;padding-right:6.700px">$86.81</div><div class="abs r fs" style="left:463px;width:72px;top:585px;padding-right:7px">Per Action</div>
<div class="abs r fb n" style="left:535px;width:85px;top:571px;padding-right:6.700px">233</div><div class="abs r fs" style="left:535px;width:85px;top:585px;padding-right:7px">Total</div>
<div class="abs r fb n" style="left:620px;width:84px;top:571px;padding-right:6.700px">$26,633.00</div><div class="abs r fs" style="left:620px;width:84px;top:585px;padding-right:7px">Total</div>
<div class="abs r fb n" style="left:704px;width:72px;top:571px;padding-right:6.700px">$203.42</div><div class="abs r fs" style="left:704px;width:72px;top:585px;padding-right:7px">Per Action</div>
<div class="abs r fb n" style="left:776px;width:85px;top:571px;padding-right:6.700px">0.56</div><div class="abs r fs" style="left:776px;width:85px;top:585px;padding-right:7px">Average</div>
<div class="abs r fb n" style="left:861px;width:69px;top:571px;padding-right:6.700px">1,083,099</div><div class="abs r fs" style="left:861px;width:69px;top:585px;padding-right:7px">People</div>
<div class="abs r fb n" style="left:930px;width:67px;top:571px;padding-right:6.700px">4.98</div><div class="abs r fs" style="left:930px;width:67px;top:585px;padding-right:7px">Per Person</div>
<div class="abs r fb n" style="left:997px;width:60px;top:571px;padding-right:6.700px">0.31%</div><div class="abs r fs" style="left:997px;width:60px;top:585px;padding-right:7px">Per Imp...</div>
<div class="abs r fb n" style="left:1057px;width:90px;top:571px;padding-right:6.700px">$47,396.58</div><div class="abs r fs" style="left:1057px;width:90px;top:585px;padding-right:7px">Total Spent</div>
<div class="abs r fb n" style="left:1147px;width:84px;top:571px;padding-right:6.700px"></div><div class="abs r fs" style="left:1147px;width:84px;top:585px;padding-right:7px"></div>
</div>
<div class="abs" style="left:0;top:125px;width:3px;height:490px;background:#e9ebee"></div>
</body>
</html>
